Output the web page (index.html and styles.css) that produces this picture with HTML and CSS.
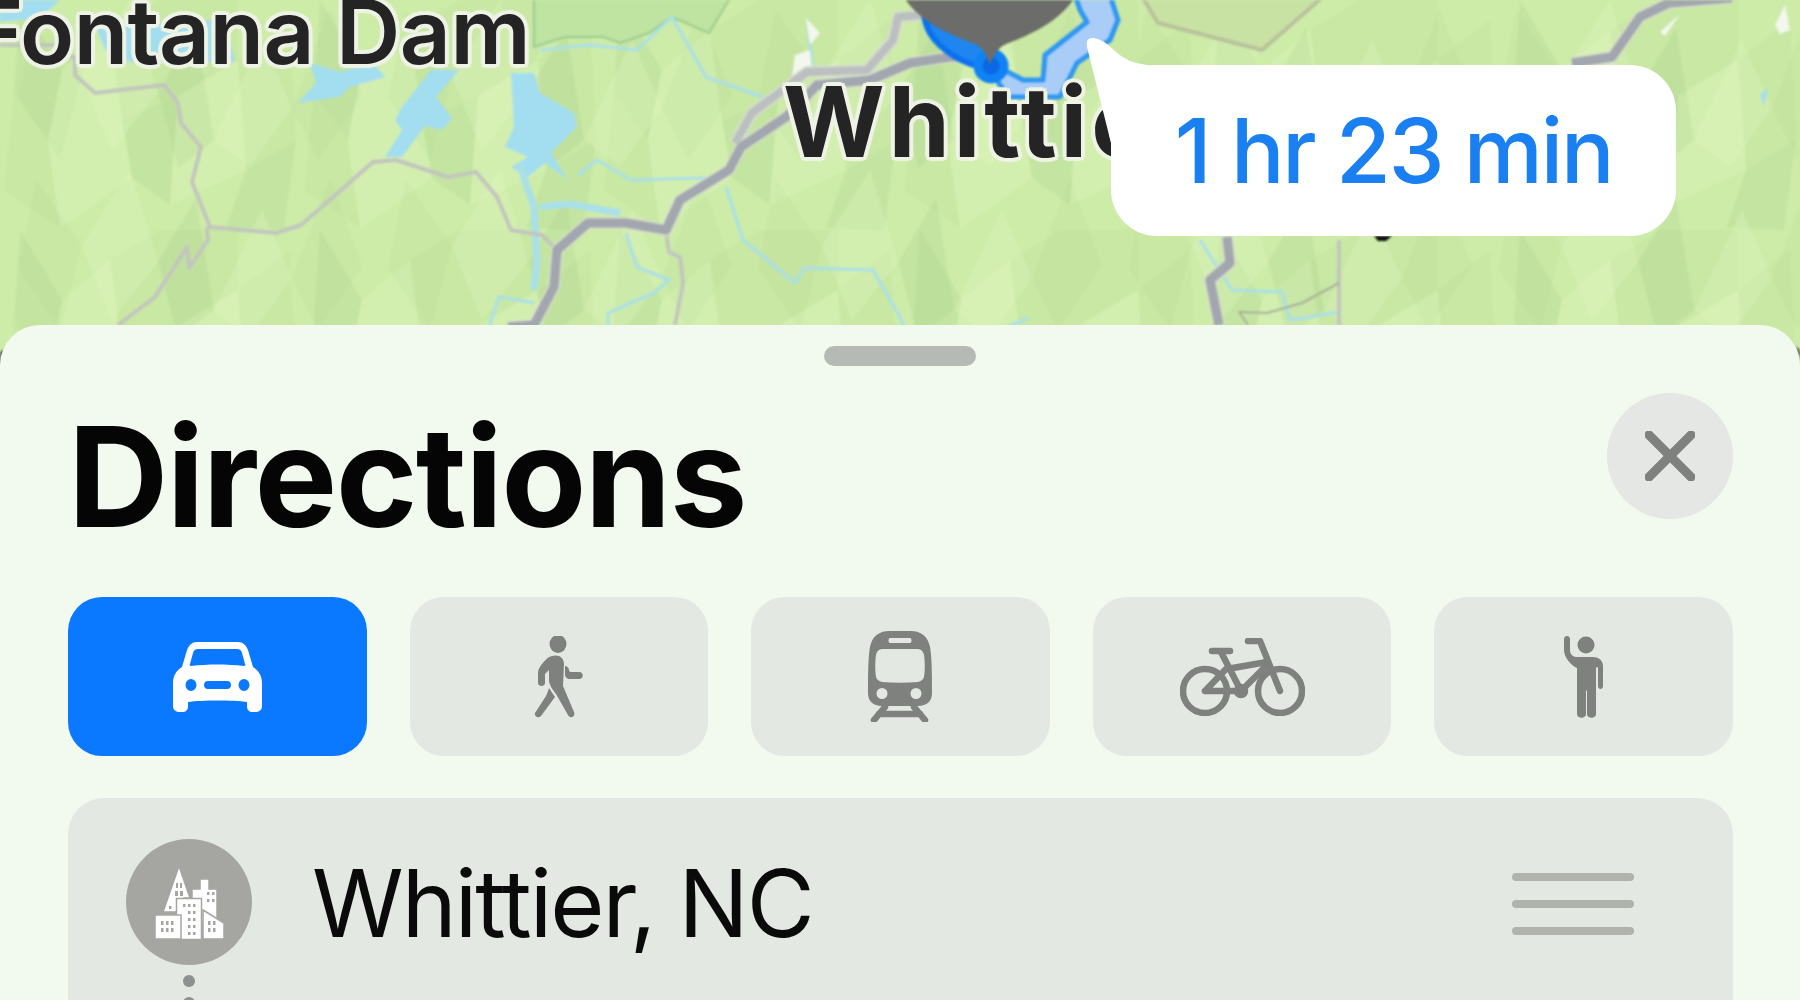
FILE: index.html
```html
<!DOCTYPE html>
<html lang="en">
<head>
    <meta charset="UTF-8">
    <title>Directions</title>
    <link rel="stylesheet" href="styles.css">
</head>
<body>
    <div class="screen">
        <div class="map">
            <svg class="map-art" viewBox="0 0 1800 400" width="1800" height="400">
                <defs>
                    <pattern id="shardsA" width="300" height="230" patternUnits="userSpaceOnUse">
                        <polygon class="dark" points="20,0 62,70 48,140 14,92"/>
                        <polygon class="light" points="62,70 110,30 122,120 48,140"/>
                        <polygon class="dark2" points="110,30 160,0 178,96 122,120"/>
                        <polygon class="dark" points="122,120 178,96 170,205 132,178"/>
                        <polygon class="light" points="178,96 238,60 246,170 170,205"/>
                        <polygon class="dark2" points="238,60 290,20 296,140 246,170"/>
                        <polygon class="dark2" points="14,92 48,140 60,228 4,190"/>
                        <polygon class="light" points="48,140 122,120 132,178 60,228"/>
                        <polygon class="dark" points="246,170 296,140 284,230 226,228"/>
                        <polygon class="dark2" points="160,0 238,0 238,60 178,96"/>
                    </pattern>
                    <pattern id="shardsB" width="370" height="170" patternUnits="userSpaceOnUse">
                        <polygon class="dark2" points="36,10 82,76 60,160 18,98"/>
                        <polygon class="light" points="82,76 130,0 158,92 112,150"/>
                        <polygon class="dark" points="158,92 196,28 214,140 178,168"/>
                        <polygon class="light" points="214,140 262,40 292,108 250,166"/>
                        <polygon class="dark2" points="292,108 330,8 362,96 318,160"/>
                    </pattern>
                    <polyline id="roadMain" points="508,327 534,325 554,287 557,250 588,223 626,223 666,230 680,200 729,170 741,147 786,117 803,100 817,85 870,80 910,63 950,57 977,57"/>
                    <polyline id="roadUpper" points="735,143 752,113 760,107 807,72 867,70 893,40 898,17 923,15"/>
                    <polyline id="roadRight" points="1572,63 1612,57 1640,17 1669,3 1732,-2"/>
                    <polyline id="roadLower" points="1227,237 1230,263 1210,280 1219,325"/>
                </defs>
                <rect class="land" width="1800" height="400"/>
                <rect fill="url(#shardsA)" width="1800" height="400"/>
                <rect fill="url(#shardsB)" width="1800" height="400"/>

                <!-- parks -->
                <path class="park" d="M534 -5V47L565 37L603 37L620 43L649 33L672 17L709 33L732 -5Z"/>
                <path class="park-tan" d="M1141 -5L1158 23L1262 50L1325 -5"/>

                <!-- water -->
                <path class="lake" d="M0 0H60L40 18L0 22Z"/>
                <path class="lake" d="M95 25L225 20L235 62L130 62L105 50Z"/>
                <path class="lake" d="M298 103L316 83L310 63L340 72L373 63L385 77L350 87L339 97Z"/>
                <path class="lake" d="M431 70L459 70L436 97L452 118L442 130L425 126L402 157L385 157L402 130L395 120L402 107Z"/>
                <path class="lake" d="M511 73L534 73L540 93L574 113L577 127L551 153L568 180L545 163L528 177L511 167L528 157L505 147L514 127Z"/>
                <polyline class="river wide" points="520,165 528,190 534,207 537,260 534,290"/>
                <polyline class="river wide" points="540,207 570,204 620,213"/>
                <polyline class="river" points="626,233 637,267 669,280 654,293 608,313 608,330"/>
                <polyline class="river" points="578,175 597,160 631,180 706,178"/>
                <polyline class="river" points="726,187 743,240 795,283 804,268 873,270 900,317 905,330"/>
                <polyline class="river" points="540,50 590,45 637,50 672,17 706,77 763,97"/>
                <polyline class="river" points="488,330 499,297 534,303"/>
                <polyline class="river" points="808,20 812,70"/>
                <polyline class="river" points="1200,240 1232,290 1282,292 1290,320 1340,312"/>
                <polyline class="river" points="1000,330 1028,318"/>
                <path class="lake" d="M1760 95L1768 88L1764 106Z"/>
                <path class="snow" d="M806 18L820 33L810 45Z"/>
                <path class="snow" d="M795 55L810 50L812 72L792 76Z"/>
                <path class="snow" d="M1660 32L1680 14L1665 36Z"/>
                <path class="snow" d="M1775 25L1785 5L1790 30L1780 34Z"/>

                <!-- thin roads -->
                <g class="road-thin">
                    <polyline points="75,55 75,75 95,93 164,85 178,103 181,123 201,147 192,182 210,227 276,233 301,225 373,162 396,160 448,177 476,172 497,197 511,230 542,235 557,250"/>
                    <polyline points="207,227 208,240 189,268 187,247 155,297 118,325"/>
                    <polyline points="666,233 669,252 680,257 683,283 675,325"/>
                    <polyline points="1339,240 1339,325"/>
                    <polyline class="hair" points="1339,283 1302,303 1267,313 1239,312 1248,325"/>
                    <polyline points="0,45 60,45 75,60"/>
                </g>

                <!-- main roads -->
                <g class="road-edge">
                    <use href="#roadMain"/>
                    <use href="#roadUpper"/>
                    <use href="#roadRight"/>
                    <use href="#roadLower"/>
                </g>
                <g class="road-main">
                    <use href="#roadMain"/>
                    <use href="#roadRight"/>
                    <use href="#roadLower"/>
                </g>
                <use class="road-upper" href="#roadUpper"/>

                <!-- route and destination pin -->
                <path class="route-area" d="M1075 -5L1080 10L1087 22L1045 55L1043 80L1023 80L1008 72L990 70L1008 97L1060 97L1077 63L1110 40L1118 20L1110 -5Z"/>
                <path class="route-dark" d="M925 20C930 45 960 62 978 66L990 50L975 30Z"/>
                <circle class="route-ring" cx="991" cy="66" r="13"/>
                <path class="pin" d="M895 -30C898 15 950 35 975 44C984 48 986 56 990 64C994 56 997 48 1006 44C1030 35 1080 15 1084 -30Z"/>
                <path class="label-scrap" d="M1374 236H1392L1386 241H1378Z"/>
                <path class="corner-road" d="M0 352L5 349L3 374H0Z"/>
                <path class="corner-road" d="M1796 346L1800 350V362Z"/>
            </svg>

            <div class="label label-dam">Fontana Dam</div>
            <div class="label label-town">Whittier</div>

            <div class="bubble">
                <svg class="bubble-tail" viewBox="0 0 80 120" width="80" height="120">
                    <path d="M26 110L2 14Q0 4 9 5Q18 6 30 18Q42 30 62 32L80 33V110Z"/>
                </svg>
                <span class="bubble-time">1 hr 23 min</span>
            </div>
        </div>

        <div class="sheet">
            <div class="handle"></div>

            <div class="sheet-header">
                <h1>Directions</h1>
                <div class="close-btn">
                    <svg viewBox="0 0 50 50" width="50" height="50">
                        <path d="M4 4L46 46M46 4L4 46"/>
                    </svg>
                </div>
            </div>

            <div class="modes">
                <div class="mode active">
                    <svg viewBox="0 0 89 70" width="89" height="70">
                        <path fill-rule="evenodd" d="M24 0H65C70 0 73 3 75 8L80 25C85 28 89 33 89 41V64C89 68 86 70 82 70H80C76 70 74 68 74 64V60C60 58 29 58 15 60V64C15 68 13 70 9 70H7C3 70 0 68 0 64V41C0 33 4 28 9 25L14 8C16 3 19 0 24 0ZM25 7C22 7 21 8 20 11L17 22C16 23 17 24 18 24C35 22 54 22 71 24C72 24 73 23 72 22L69 11C68 8 67 7 64 7ZM18 37A5.5 6 0 1 0 18 49A5.5 6 0 1 0 18 37ZM71 37A5.5 6 0 1 0 71 49A5.5 6 0 1 0 71 37ZM35 39C32 39 31 41 31 43C31 45 32 47 35 47H54C57 47 58 45 58 43C58 41 57 39 54 39Z"/>
                    </svg>
                </div>
                <div class="mode">
                    <svg viewBox="0 0 49 82" width="49" height="82">
                        <ellipse cx="24" cy="8" rx="8.5" ry="9"/>
                        <path d="M18 20C24 18 30 21 30 28L29 50L40 76C42 81 36 83 34 79L22 58C18 53 15 48 15 44L15 34L11 38V47C11 51 4 51 4 47V37C4 33 6 31 8 28C11 24 14 21 18 20Z"/>
                        <path d="M15 52L21 61L7 80C4 83 0 80 1 77L12 60C13 58 14 55 15 52Z"/>
                        <path d="M31 30C33 30 35 32 35 34C35 36 37 36 38 36H45C50 36 50 43 45 43H36C33 43 31 41 31 38Z"/>
                    </svg>
                </div>
                <div class="mode">
                    <svg viewBox="0 0 64 91" width="64" height="91">
                        <path fill-rule="evenodd" d="M22 0H42C54 0 60 6 62 16C64 26 64 48 64 62C64 70 59 75 50 75H14C5 75 0 70 0 62C0 48 0 26 2 16C4 6 10 0 22 0ZM22 7C20 7 20 12 22 12H42C44 12 44 7 42 7ZM15 18C11 18 9 20 8 24C7 30 7 40 8 46C9 49 11 50 14 51C26 52 38 52 50 51C53 50 55 49 56 46C57 40 57 30 56 24C55 20 53 18 49 18ZM14 57A5.5 5.5 0 1 0 14 68A5.5 5.5 0 1 0 14 57ZM48 57A5.5 5.5 0 1 0 48 68A5.5 5.5 0 1 0 48 57Z"/>
                        <path class="icon-line" d="M17 76L6 89M46 76L57 89M11 83H52"/>
                    </svg>
                </div>
                <div class="mode">
                    <svg viewBox="0 0 125 78" width="125" height="78">
                        <g class="icon-line">
                            <circle cx="25" cy="53" r="22"/>
                            <circle cx="100" cy="53" r="22"/>
                            <circle cx="61" cy="53" r="4"/>
                            <path d="M32 13H50M41 14L61 53M47 31L87 24M68 3H80L100 53M87 27L61 53M25 53H61M25 53L46 31"/>
                        </g>
                    </svg>
                </div>
                <div class="mode">
                    <svg viewBox="0 0 40 82" width="40" height="82">
                        <circle cx="22" cy="9" r="8.5"/>
                        <path d="M0 3C0 -1 6 -1 6 3V14C6 18 9 21 12 21H29C34 21 39 24 39 30V50C39 54 34 54 34 50V32C34 31 32 31 32 32V78C32 83 23 83 23 78V55C23 54 22 54 22 55V78C22 83 13 83 13 78V32C8 30 0 22 0 14Z"/>
                    </svg>
                </div>
            </div>

            <div class="route-row">
                <div class="place-col">
                    <div class="place-icon">
                        <svg viewBox="0 0 69 73" width="69" height="73">
                            <path class="bldg" d="M24 0L35 32H29V46H8Z"/>
                            <path class="bldg" d="M45 13H54V23H62V56H37V23H45Z"/>
                            <rect class="bldg" x="21.5" y="32.5" width="25" height="41"/>
                            <rect class="bldg" x="0" y="49" width="26" height="24"/>
                            <path class="bldg" d="M48 44L69 57V73H48Z"/>
                            <g class="win">
                                <rect x="21" y="17" width="2" height="5"/><rect x="25" y="17" width="2" height="5"/>
                                <rect x="20" y="25" width="3" height="5"/><rect x="25" y="25" width="3" height="5"/>
                                <rect x="14" y="40" width="2.5" height="3"/>
                                <rect x="52" y="26" width="2.5" height="3"/><rect x="57" y="26" width="2.5" height="3"/>
                                <rect x="52" y="33" width="2.5" height="3"/><rect x="57" y="33" width="2.5" height="3"/>
                                <rect x="28" y="38" width="2.5" height="3"/><rect x="33" y="38" width="2.5" height="3"/><rect x="38" y="38" width="2.5" height="3"/>
                                <rect x="33" y="45" width="2.5" height="3"/><rect x="38" y="45" width="2.5" height="3"/>
                                <rect x="33" y="52" width="2.5" height="3"/><rect x="38" y="52" width="2.5" height="3"/>
                                <rect x="33" y="59" width="2.5" height="3"/><rect x="38" y="59" width="2.5" height="3"/>
                                <rect x="33" y="66" width="2.5" height="3"/><rect x="38" y="66" width="2.5" height="3"/>
                                <rect x="6" y="55" width="2.5" height="4"/><rect x="11" y="55" width="2.5" height="4"/><rect x="16" y="55" width="2.5" height="4"/>
                                <rect x="6" y="62" width="2.5" height="4"/><rect x="11" y="62" width="2.5" height="4"/><rect x="16" y="62" width="2.5" height="4"/>
                                <rect x="53" y="55" width="2.5" height="4"/><rect x="58" y="55" width="2.5" height="4"/>
                                <rect x="53" y="62" width="2.5" height="4"/><rect x="58" y="62" width="2.5" height="4"/>
                            </g>
                        </svg>
                    </div>
                    <div class="route-dot"></div>
                    <div class="route-dot"></div>
                </div>
                <div class="place-name">Whittier, NC</div>
                <div class="reorder">
                    <span></span>
                    <span></span>
                    <span></span>
                </div>
            </div>
        </div>
    </div>
</body>
</html>
```

FILE: styles.css
```css
* {
    box-sizing: border-box;
}
body {
    margin: 0;
    background: #cbeaa6;
    font-family: Inter, "Liberation Sans", sans-serif;
}
.screen {
    position: relative;
    width: 1800px;
    height: 1000px;
    overflow: hidden;
}

/* map */
.map {
    position: absolute;
    top: 0;
    left: 0;
    width: 1800px;
    height: 400px;
}
.map-art {
    display: block;
    filter: blur(0.8px);
}
.land {
    fill: #cdeca8;
}
.dark {
    fill: #8fb878;
    opacity: 0.14;
}
.dark2 {
    fill: #9cc484;
    opacity: 0.1;
}
.light {
    fill: #e2f7c4;
    opacity: 0.25;
}
.park {
    fill: #bfe3a0;
    stroke: #9ccc8f;
    stroke-width: 2;
}
.park-tan {
    fill: #c8e2a4;
    stroke: #b9c29c;
    stroke-width: 4;
}
.lake {
    fill: #a3def0;
}
.snow {
    fill: #f3f7ee;
}
.river {
    fill: none;
    stroke: #a9e0ea;
    stroke-width: 3;
}
.river.wide {
    stroke-width: 7;
}
.road-thin polyline {
    fill: none;
    stroke: #c2c6bd;
    stroke-width: 4;
    stroke-linejoin: round;
}
.road-thin .hair {
    stroke: #a8b09a;
    stroke-width: 2;
}
.road-edge {
    fill: none;
    stroke: #d6dfcb;
    stroke-width: 12;
    stroke-linejoin: round;
}
.road-main {
    fill: none;
    stroke: #a2a6ae;
    stroke-width: 9;
    stroke-linejoin: round;
}
.road-upper {
    fill: none;
    stroke: #bcbfc0;
    stroke-width: 8;
    stroke-linejoin: round;
}
.route-area {
    fill: #a9cdf7;
    stroke: #2f97f3;
    stroke-width: 5;
    stroke-linejoin: round;
}
.route-dark {
    fill: #1f86f0;
    stroke: #0a72ee;
    stroke-width: 6;
}
.route-ring {
    fill: #0a68e4;
    stroke: #0f82f4;
    stroke-width: 9;
}
.pin {
    fill: #6c6c6a;
}
.label-scrap {
    fill: #111;
}
.corner-road {
    fill: #55585a;
}
.label {
    position: absolute;
    color: #242424;
    white-space: nowrap;
    text-shadow: 4px 0 1px #eef3e6, -4px 0 1px #eef3e6, 0 4px 1px #eef3e6, 0 -4px 1px #eef3e6,
        3px 3px 1px #eef3e6, -3px 3px 1px #eef3e6, 3px -3px 1px #eef3e6, -3px -3px 1px #eef3e6;
}
.label-dam {
    left: -29px;
    top: -22px;
    font-size: 89px;
    line-height: 108px;
    font-weight: 600;
    letter-spacing: -0.5px;
}
.label-town {
    left: 783px;
    top: 62px;
    font-size: 98px;
    line-height: 120px;
    font-weight: 700;
    letter-spacing: 4px;
}
.bubble {
    position: absolute;
    left: 1111px;
    top: 65px;
    width: 565px;
    height: 171px;
    display: flex;
    align-items: center;
    justify-content: center;
    background: #fff;
    border-radius: 46px;
}
.bubble-tail {
    position: absolute;
    left: -26px;
    top: -32px;
}
.bubble-tail path {
    fill: #fff;
}
.bubble-time {
    position: relative;
    color: #1a7ff0;
    font-size: 89px;
    font-weight: 500;
    letter-spacing: -2.2px;
}

/* bottom sheet */
.sheet {
    position: relative;
    height: 675px;
    margin-top: 325px;
    padding: 0 67px 0 68px;
    background: #f2f9ef;
    border-radius: 40px 40px 0 0;
}
.handle {
    position: absolute;
    top: 21px;
    left: 824px;
    width: 152px;
    height: 20px;
    background: #b6bab4;
    border-radius: 10px;
}
.sheet-header {
    display: flex;
    justify-content: space-between;
    align-items: flex-start;
    height: 272px;
    padding-top: 68px;
}
h1 {
    margin: 21px 0 0 0;
    color: #050505;
    font-size: 139px;
    line-height: 126px;
    font-weight: 700;
    letter-spacing: -1.6px;
}
.close-btn {
    display: flex;
    align-items: center;
    justify-content: center;
    flex: none;
    width: 126px;
    height: 126px;
    background: #e4e7e3;
    border-radius: 50%;
}
.close-btn path {
    fill: none;
    stroke: #7e817e;
    stroke-width: 9;
    stroke-linecap: round;
}
.modes {
    display: grid;
    grid-template-columns: repeat(5, 1fr);
    gap: 43px;
    height: 159px;
}
.mode {
    display: flex;
    align-items: center;
    justify-content: center;
    background: #e3e8e2;
    border-radius: 34px;
}
.mode svg {
    fill: #7e817e;
}
.mode.active {
    background: #0a78ff;
}
.mode.active svg {
    fill: #fff;
}
.icon-line {
    fill: none;
    stroke: #7e817e;
    stroke-width: 6.5;
    stroke-linecap: round;
    stroke-linejoin: round;
}
.route-row {
    display: flex;
    align-items: flex-start;
    height: 260px;
    margin-top: 42px;
    padding: 41px 99px 0 58px;
    background: #e3e8e2;
    border-radius: 36px 36px 0 0;
}
.place-col {
    display: flex;
    flex-direction: column;
    align-items: center;
    gap: 10px;
    flex: none;
    width: 126px;
}
.place-icon {
    display: flex;
    align-items: center;
    justify-content: center;
    width: 126px;
    height: 126px;
    background: #a5a6a2;
    border-radius: 50%;
}
.bldg {
    fill: #fff;
    stroke: #a5a6a2;
    stroke-width: 1.5;
}
.win {
    fill: #a5a6a2;
}
.route-dot {
    width: 12px;
    height: 12px;
    background: #8c908e;
    border-radius: 50%;
}
.place-name {
    flex: 1;
    margin: 8px 0 0 60px;
    color: #0a0a0a;
    font-size: 93px;
    line-height: 112px;
    letter-spacing: -2px;
}
.reorder {
    display: flex;
    flex-direction: column;
    gap: 19px;
    width: 122px;
    margin-top: 34px;
}
.reorder span {
    height: 8px;
    background: #b0b3ac;
    border-radius: 4px;
}
```
